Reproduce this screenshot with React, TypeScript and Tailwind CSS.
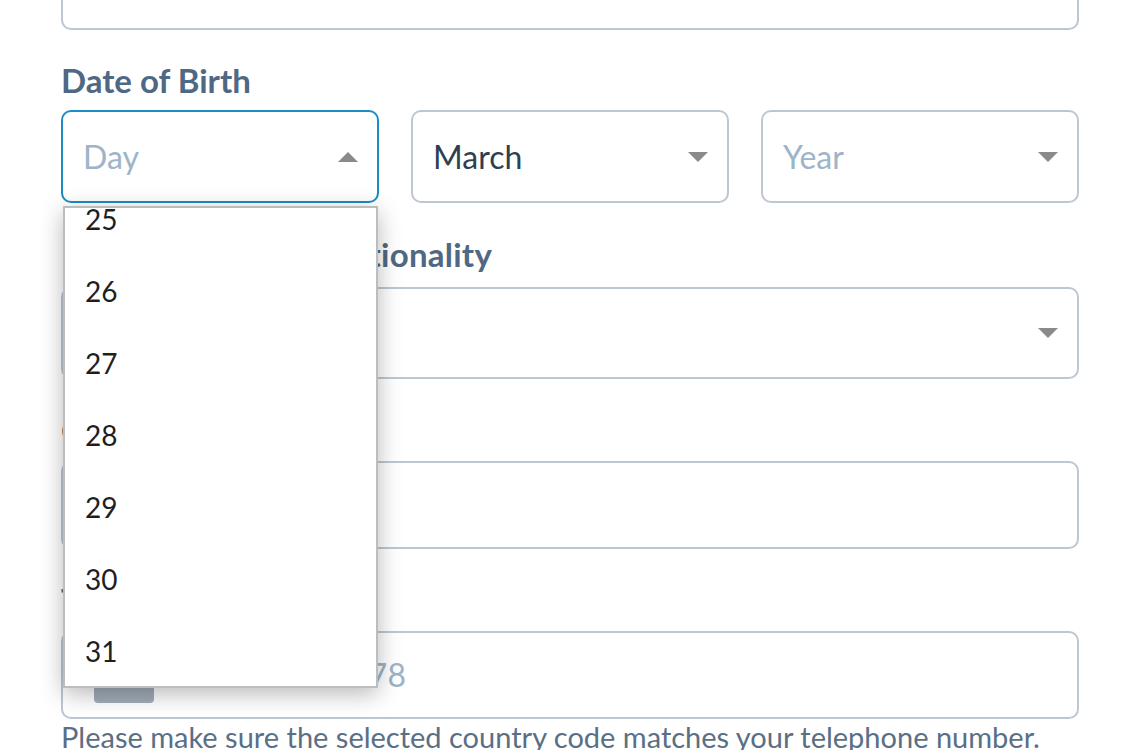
const days = [25, 26, 27, 28, 29, 30, 31];

const Arrow = ({ up = false }: { up?: boolean }) => (
  <svg width="20" height="10" viewBox="0 0 20 10" className="shrink-0">
    {up ? <path d="M0 10 L10 0 L20 10 Z" fill="#8a8a8a" /> : <path d="M0 0 L20 0 L10 10 Z" fill="#8a8a8a" />}
  </svg>
);

const Label = ({ text, className = "" }: { text: string; className?: string }) => (
  <div className={`text-[33px] leading-[40px] font-bold text-[#4f6883] ${className}`}>{text}</div>
);

const App = () => {
  return (
    <div
      className="relative w-[1140px] h-[750px] overflow-hidden bg-white"
      style={{ fontFamily: "Lato, 'Open Sans', sans-serif" }}
    >
      <div className="px-[61px]">
        {/* field above, cut off at the top */}
        <div className="-mt-[60px] h-[90px] rounded-[10px] border-2 border-[#bcc7d3]" />

        <Label text="Date of Birth" className="mt-[30px] mb-[10px]" />
        <div className="grid grid-cols-3 gap-[32px]">
          <div className="relative">
            <div className="flex h-[93px] items-center justify-between rounded-[10px] border-2 border-[#1b8cc6] pl-[20px] pr-[19px]">
              <span className="text-[32px] text-[#9db4c9]">Day</span>
              <Arrow up />
            </div>
            <div className="absolute left-[2px] right-[1px] top-[96px] z-10 h-[482px] overflow-hidden border-2 border-[#bdbdbd] bg-white shadow-[0_6px_22px_rgba(0,0,0,0.28)]">
              <div className="-mt-[25px]">
                {days.map((d) => (
                  <div key={d} className="flex h-[72px] items-center pl-[20px] text-[28px] text-[#1f1f1f]">
                    {d}
                  </div>
                ))}
              </div>
            </div>
          </div>
          <div className="flex h-[93px] items-center justify-between rounded-[10px] border-2 border-[#bcc7d3] pl-[20px] pr-[19px]">
            <span className="text-[32px] text-[#2e3f52]">March</span>
            <Arrow />
          </div>
          <div className="flex h-[93px] items-center justify-between rounded-[10px] border-2 border-[#bcc7d3] pl-[20px] pr-[19px]">
            <span className="text-[32px] text-[#9db4c9]">Year</span>
            <Arrow />
          </div>
        </div>

        <Label text="Home Country of Nationality" className="mt-[31px] mb-[13px] tracking-[0.25px]" />
        <div className="flex h-[92px] items-center justify-end rounded-[10px] border-2 border-[#bcc7d3] pr-[19px]">
          <Arrow />
        </div>

        <Label text="Country of Residence" className="mt-[31px] mb-[11px]" />
        <div className="h-[88px] rounded-[10px] border-2 border-[#bcc7d3]" />

        <Label text="Telephone Number" className="mt-[31px] mb-[11px]" />
        <div className="flex h-[88px] items-center rounded-[10px] border-2 border-[#bcc7d3]">
          <div className="ml-[31px] mt-[20px] h-[35px] w-[60px] rounded-[4px] bg-[#a3adb8]" />
          <span className="ml-[50px] text-[32px] text-[#9db4c9]">0412 345 678</span>
        </div>
        <p className="text-[29px] leading-[36px] text-[#5a6f85]">
          Please make sure the selected country code matches your telephone number.
        </p>
      </div>
    </div>
  );
};

export default App;
